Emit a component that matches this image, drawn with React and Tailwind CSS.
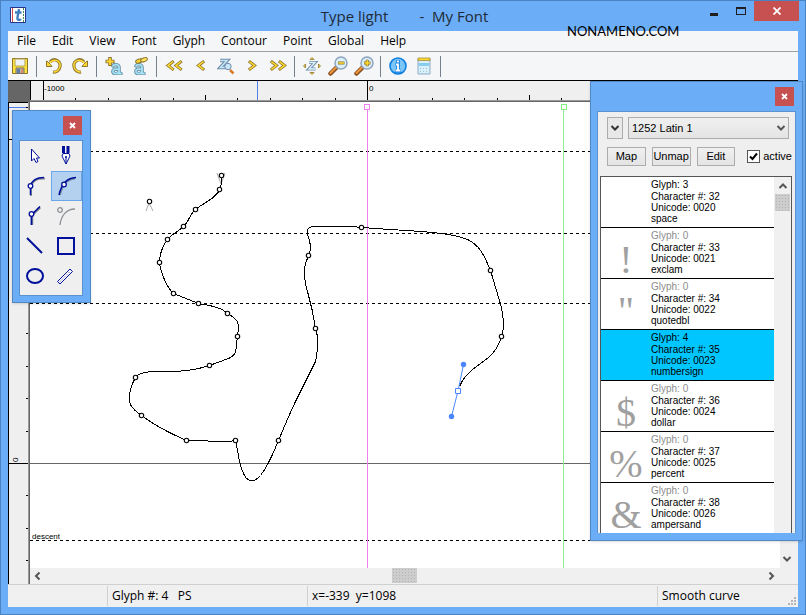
import { useState } from "react";

const menus = ["File", "Edit", "View", "Font", "Glyph", "Contour", "Point", "Global", "Help"];

const glyphs = [
  { glyph: 3, code: 32, unicode: "0020", name: "space", char: "" },
  { glyph: 0, code: 33, unicode: "0021", name: "exclam", char: "!" },
  { glyph: 0, code: 34, unicode: "0022", name: "quotedbl", char: '"' },
  { glyph: 4, code: 35, unicode: "0023", name: "numbersign", char: "" },
  { glyph: 0, code: 36, unicode: "0024", name: "dollar", char: "$" },
  { glyph: 0, code: 37, unicode: "0025", name: "percent", char: "%" },
  { glyph: 0, code: 38, unicode: "0026", name: "ampersand", char: "&" },
];

// on-curve points of the open contour
const points = [
  [149, 201], [221, 175], [219, 189], [195, 209], [183, 226], [167, 239], [159, 262],
  [173, 293], [198, 303], [227, 313], [237, 336], [209, 365], [135, 377], [141, 415],
  [186, 440], [235, 440], [278, 440], [315, 328], [308, 255], [361, 227], [490, 270],
  [501, 336],
];

const contour =
  "M221 175 C222 180 221 184 219 189 C217 197 202 203 195 209 C189 214 188 222 183 226 " +
  "C178 231 172 233 167 239 C162 246 159 254 159 262 C160 272 167 288 173 293 L198 303 " +
  "C208 305 220 306 227 313 C237 319 238 321 238 328 L237 336 C235 350 237 354 228 358 " +
  "L209 365 C192 371 178 371 155 371 C143 371 138 373 135 377 C129 388 128 394 129 401 " +
  "C130 408 137 412 141 415 C157 427 172 434 186 440 L228 441 L235 440 " +
  "C238 452 238 464 244 475 C248 482 254 482 260 475 C268 465 273 452 278 440 " +
  "C285 423 290 411 297 397 L315 361 C317 355 317 340 317 336 L315 328 " +
  "C312 307 310 302 305 284 C304 277 304 266 305 263 L308 255 C311 248 310 246 309 240 " +
  "C307 234 306 230 307 229 C308 227 311 226 315 226 L352 226 L361 227 L390 229 " +
  "C420 231 450 232 467 239 C480 245 484 256 490 270 L501 307 C503 317 503 324 503 328 " +
  "L501 336 C497 350 489 357 480 363 C468 371 462 378 459 386";

const Icon = ({ size = 18, children, ...rest }) => (
  <svg width={size} height={size} viewBox={`0 0 ${size} ${size}`} fill="none" aria-hidden="true" {...rest}>
    {children}
  </svg>
);

const Chevron = ({ d, size = 10, color = "#555" }) => (
  <Icon size={size}>
    <path d={d} stroke={color} strokeWidth="2" />
  </Icon>
);

const DOWN = "M1.500 3 L5 6.500 L8.500 3";
const UP = "M1.500 7 L5 3.500 L8.500 7";
const LEFT = "M6.500 1.500 L3 5 L6.500 8.500";
const RIGHT = "M3.500 1.500 L7 5 L3.500 8.500";

const Arrows = ({ paths }) => (
  <Icon>
    {paths.map((d) => (
      <g key={d} strokeLinecap="square">
        <path d={d} stroke="#8b7430" strokeWidth="3" />
        <path d={d} stroke="#ffd92e" strokeWidth="1.500" />
      </g>
    ))}
  </Icon>
);

const Magnifier = ({ plus }) => (
  <Icon size={20}>
    <path d="M2.500 17.500 L8.500 11.500" stroke="#8a5020" strokeWidth="4.500" strokeLinecap="round" />
    <path d="M2.500 17 L8 11.500" stroke="#f0963c" strokeWidth="2" strokeLinecap="round" />
    <circle cx="13" cy="7" r="6" fill="#dceffa" stroke="#8fa5bf" strokeWidth="1.500" />
    <path d="M10 7h6.500" stroke="#8b7430" strokeWidth="3" />
    {plus && <path d="M13.200 3.700v6.600" stroke="#8b7430" strokeWidth="3" />}
    <path d="M10.500 7h5.500" stroke="#ffd92e" strokeWidth="1.500" />
    {plus && <path d="M13.200 4.200v5.600" stroke="#ffd92e" strokeWidth="1.500" />}
  </Icon>
);

const LetterA = ({ y = 0 }) => (
  <g transform={`translate(0 ${y})`} strokeLinecap="round">
    <path d="M8 8 C9 6 14 6 14 9.500 V15.500 H16 M14 11.500 C10 10.500 7.500 11.500 8 14 C9 16.500 13 16 14 14" stroke="#6a93a8" strokeWidth="3.600" />
    <path d="M8 8 C9 6 14 6 14 9.500 V15.500 H16 M14 11.500 C10 10.500 7.500 11.500 8 14 C9 16.500 13 16 14 14" stroke="#a5e2f5" strokeWidth="1.800" />
  </g>
);

const toolbar = [
  [
    {
      label: "Save",
      icon: (
        <Icon>
          <path d="M1.500 1.500h15v15h-15z" fill="#ffe23c" stroke="#8b7430" />
          <path d="M4 2h10v7H4z" fill="#eef3f7" stroke="#b9a44c" />
          <path d="M5 11h8v5.500H5z" fill="#b5b9c4" stroke="#77705a" />
          <path d="M6 12h3v4H6z" fill="#5e7ea8" />
          <path d="M10 12h2v4h-2z" fill="#e28b5c" />
        </Icon>
      ),
    },
  ],
  [
    {
      label: "Undo",
      icon: (
        <Icon>
          <path d="M5 5 C9 0 16 4 15 9.500 C14.500 13.500 11 15.500 8 15" stroke="#8b7430" strokeWidth="3.200" />
          <path d="M1.500 4 V9.500 H7L5.500 7.500L3 5z" fill="#ffd92e" stroke="#8b7430" />
          <path d="M4.500 6 C9 .5 16 4 15 9.500 C14.500 13 11 15 8.500 15" stroke="#ffd92e" strokeWidth="1.500" />
        </Icon>
      ),
    },
    {
      label: "Redo",
      icon: (
        <Icon>
          <path d="M13 5 C9 0 2 4 3 9.500 C3.500 13.500 7 15.500 10 15" stroke="#8b7430" strokeWidth="3.200" />
          <path d="M16.500 4 V9.500 H11L12.500 7.500L15 5z" fill="#ffd92e" stroke="#8b7430" />
          <path d="M13.500 6 C9 .5 2 4 3 9.500 C3.500 13 7 15 9.500 15" stroke="#ffd92e" strokeWidth="1.500" />
        </Icon>
      ),
    },
  ],
  [
    {
      label: "Add glyph",
      icon: (
        <Icon>
          <LetterA y={1} />
          <path d="M5 0v9M.5 4.500h9" stroke="#8b7430" strokeWidth="3.600" />
          <path d="M5 1v7M1.500 4.500h7" stroke="#ffd92e" strokeWidth="1.800" />
        </Icon>
      ),
    },
    {
      label: "Clear glyph",
      icon: (
        <Icon>
          <g transform="translate(-3 1)"><LetterA /></g>
          <ellipse cx="8" cy="4" rx="3.500" ry="1.900" fill="#ffd92e" stroke="#8b7430" transform="rotate(-20 8 4)" />
          <ellipse cx="13" cy="2.800" rx="3.500" ry="1.900" fill="#ffe45c" stroke="#8b7430" transform="rotate(-20 13 2.800)" />
        </Icon>
      ),
    },
  ],
  [
    { label: "First", icon: <Arrows paths={["M7.500 5 L3 8.500 L7.500 12", "M15.500 5 L11 8.500 L15.500 12"]} /> },
    { label: "Previous", icon: <Arrows paths={["M12 5 L7.500 8.500 L12 12"]} /> },
    {
      label: "Find glyph",
      icon: (
        <Icon>
          <path d="M3 3.500h7L3.500 10.500H9" stroke="#6f8dab" strokeWidth="3.600" />
          <path d="M3 3.500h7L3.500 10.500H9" stroke="#c5e7f7" strokeWidth="1.500" />
          <circle cx="11" cy="9.500" r="3.200" fill="#c8e8fa" stroke="#6f8dab" />
          <path d="M13 13l3.500 3.500" stroke="#d97b2c" strokeWidth="2.500" />
        </Icon>
      ),
    },
    { label: "Next", icon: <Arrows paths={["M7 5 L11.500 8.500 L7 12"]} /> },
    { label: "Last", icon: <Arrows paths={["M3 5 L7.500 8.500 L3 12", "M11 5 L15.500 8.500 L11 12"]} /> },
  ],
  [
    {
      label: "Zoom to fit",
      icon: (
        <Icon>
          <path d="M6 5.500h6L6 12h6.500" stroke="#6f8dab" strokeWidth="3.200" />
          <path d="M6 5.500h6L6 12h6.500" stroke="#dff2fa" strokeWidth="1.300" />
          <g fill="#ffd92e" stroke="#8b7430" strokeWidth=".8">
            <path d="M9 .5l2 2H7zM9 17.500l2-2H7zM.5 9l2-2v4zM17.500 9l-2-2v4z" />
          </g>
        </Icon>
      ),
    },
    { label: "Zoom out", icon: <Magnifier /> },
    { label: "Zoom in", icon: <Magnifier plus /> },
  ],
  [
    {
      label: "Info",
      icon: (
        <Icon>
          <circle cx="9" cy="9" r="8" fill="#7cc6f8" stroke="#0f7fe0" strokeWidth="1.600" />
          <path d="M9 3v3M6.500 7.500H9V14M6 14h6" stroke="#0f7fe0" strokeWidth="3.600" />
          <path d="M9 3.500v2M7 7.500h2v6M6.500 13.500h5" stroke="#fff" strokeWidth="1.800" />
        </Icon>
      ),
    },
    {
      label: "Preview",
      icon: (
        <Icon>
          <path d="M3 1.500h12v15.500H3z" fill="#d9f0fa" stroke="#8fa8c8" />
          <path d="M3 1h12v2.500H3z" fill="#ffd92e" stroke="#a38b3c" strokeWidth=".8" />
          <path d="M3.500 6h11v3h-11z" fill="#86cdf0" />
          <path d="M5 11.500h9M5 14.500h9" stroke="#9cc3d8" strokeDasharray="1 2" />
        </Icon>
      ),
    },
  ],
];

const tools = [
  {
    label: "Select",
    icon: (
      <Icon size={24}>
        <path d="M8.500 5 V17 L11 14.500 L13 18.500 L15 17.500 L13.500 14 H16.500z" fill="#fff" stroke="#00109a" />
      </Icon>
    ),
  },
  {
    label: "Pen",
    icon: (
      <Icon size={24}>
        <path d="M8 2h3v7H8zM12.500 2h3v7h-3z" fill="#00109a" />
        <path d="M9 9.500h6l1 2.500-4 8-4-8z" fill="#fff" stroke="#00109a" />
        <path d="M12 13v7" stroke="#00109a" />
        <circle cx="12" cy="13" r="1" fill="#00109a" />
      </Icon>
    ),
  },
  {
    label: "Tangent",
    icon: (
      <Icon size={24}>
        <path d="M8 22V12C10 6 14 4.500 22 4.500" stroke="#8f9298" strokeWidth="2" />
        <path d="M7.500 21V12C9 6 14 3.500 21 3.500" stroke="#00109a" strokeWidth="1.500" />
        <circle cx="7.500" cy="12" r="2.300" fill="#fff" stroke="#00109a" strokeWidth="1.300" />
      </Icon>
    ),
  },
  {
    label: "Smooth curve",
    icon: (
      <Icon size={24}>
        <path d="M6 21C8 12 12 5 21 4.500" stroke="#7f8fa8" strokeWidth="2" />
        <path d="M5 21C7 12 11 4 22 3.500" stroke="#00109a" strokeWidth="1.500" />
        <circle cx="10" cy="10.500" r="2.300" fill="#fff" stroke="#00109a" strokeWidth="1.300" />
      </Icon>
    ),
  },
  {
    label: "Corner",
    icon: (
      <Icon size={24}>
        <path d="M9 21V11L17 3.500" stroke="#8f9298" strokeWidth="2.500" />
        <path d="M8.500 21V11L17 2.500" stroke="#00109a" strokeWidth="1.700" />
        <circle cx="8.500" cy="10" r="2.300" fill="#fff" stroke="#00109a" strokeWidth="1.300" />
      </Icon>
    ),
  },
  {
    label: "Off curve",
    icon: (
      <Icon size={24}>
        <path d="M6 21C7 12 12 5 21 5" stroke="#8f9298" strokeWidth="1.300" />
        <circle cx="6" cy="6" r="2.300" stroke="#8f9298" strokeWidth="1.300" />
      </Icon>
    ),
  },
  {
    label: "Line",
    icon: (
      <Icon size={24}>
        <path d="M4 4L19 19" stroke="#00109a" strokeWidth="2" />
      </Icon>
    ),
  },
  {
    label: "Rectangle",
    icon: (
      <Icon size={24}>
        <path d="M4 4h16v16H4z" stroke="#00109a" strokeWidth="2" />
      </Icon>
    ),
  },
  {
    label: "Ellipse",
    icon: (
      <Icon size={24}>
        <ellipse cx="12" cy="12" rx="8" ry="7" stroke="#00109a" strokeWidth="2" />
      </Icon>
    ),
  },
  {
    label: "Measure",
    icon: (
      <Icon size={24}>
        <path d="M3.500 17.500L16 5l2.500 2.500L6 20z" fill="#fff" stroke="#00109a" />
        <path d="M6 17.500L16.500 7" stroke="#00109a" strokeDasharray="1 2" />
      </Icon>
    ),
  },
];

const CloseButton = ({ label }) => (
  <button aria-label={label} className="flex h-[19px] w-[19px] items-center justify-center bg-[#c75050]">
    <Icon size={7}>
      <path d="M1 1L6 6M6 1L1 6" stroke="#fff" strokeWidth="1.800" />
    </Icon>
  </button>
);

const TitleBar = () => (
  <header className="flex h-[30px] shrink-0 items-start">
    <div className="flex flex-1 pt-1.5 pl-0.5">
      <Icon size={16}>
        <path d="M.5.500h15v15H.5z" fill="#fff" stroke="#27348b" />
        <path d="M2.500 1v14" stroke="#d04a4a" />
        <path d="M13.500 1v14" stroke="#3c8a4c" strokeDasharray="2 1" />
        <path d="M9 2L7.500 10.500C7 13.500 9.500 13.500 11 12M5 5.500h6.500" stroke="#3f7fc0" strokeWidth="2.400" />
      </Icon>
    </div>
    <h1 className="pt-[3px] text-[15px] leading-6 whitespace-pre text-[#1f2a36]">{"Type light        -  My Font"}</h1>
    <div className="flex flex-1 justify-end">
      <button aria-label="Minimize" className="flex h-5 w-7 items-end justify-center pb-[5px]">
        <span className="h-[3px] w-2 bg-[#1e1e1e]" />
      </button>
      <button aria-label="Maximize" className="flex h-5 w-[26px] items-center justify-center">
        <span className="h-2 w-2.5 border border-t-2 border-[#1e1e1e]" />
      </button>
      <button aria-label="Close" className="flex h-5 w-[45px] items-center justify-center bg-[#c75050]">
        <Icon size={8}>
          <path d="M.5.500L7.500 7.500M7.500.500L.5 7.500" stroke="#fff" strokeWidth="1.800" />
        </Icon>
      </button>
    </div>
  </header>
);

const ticks = (from, to) => {
  const list = [];
  for (let i = from; i <= to; i++) list.push(i);
  return list;
};

const TopRuler = () => (
  <div className="flex h-[21px] shrink-0 bg-[#efefef]">
    <div className="w-[22px] shrink-0 bg-[#666]" />
    <svg className="h-full min-w-0 flex-1" aria-hidden="true">
      <g transform="translate(-30 -81)" shapeRendering="crispEdges">
        <path d="M30.500 81v19M43.500 81v19" stroke="#000" />
        {ticks(1, 24).map((i) => {
          const x = Math.round(43 + i * 32.4) + 0.5;
          const top = i % 10 === 0 ? 81 : i % 5 === 0 ? 95 : 98;
          return <path key={i} d={`M${x} ${top}V100`} stroke="#000" />;
        })}
        <path d="M257.500 81v19" stroke="#4f7fe8" />
        <path d="M29 100.500H2000" stroke="#999" />
        <path d="M29 101.500H2000" stroke="#666" />
        <text x="44" y="91" fontSize="8" fontFamily="Liberation Sans, sans-serif">-1000</text>
        <text x="369" y="91" fontSize="8" fontFamily="Liberation Sans, sans-serif">0</text>
      </g>
    </svg>
  </div>
);

const SideRuler = () => (
  <svg className="w-[21px] shrink-0 self-stretch border-l border-black bg-[#efefef]" aria-hidden="true">
    <g transform="translate(-9 -102)" shapeRendering="crispEdges">
      <path d="M8 102.500h20" stroke="#000" />
      <path d="M8 107.500h20" stroke="#4f7fe8" />
      {ticks(-11, 20).map((i) => {
        const y = Math.round(463 + i * 32.4) + 0.5;
        const left = i % 10 === 0 ? 8 : i % 5 === 0 ? 23 : 26;
        return <path key={i} d={`M${left} ${y}H28`} stroke="#000" />;
      })}
      <text x="18" y="462" fontSize="8" fontFamily="Liberation Sans, sans-serif" transform="rotate(-90 18 462)">0</text>
      <path d="M28.500 102V2000" stroke="#999" />
    </g>
  </svg>
);

const Canvas = () => (
  <svg className="h-full w-full" role="img" aria-label="Glyph outline">
    <g transform="translate(-30 -102)" fill="none">
      <g stroke="#000" strokeDasharray="3 3" shapeRendering="crispEdges">
        <path d="M30 151.500H2000M30 233.500H2000M30 303.500H2000M30 540.500H2000" />
      </g>
      <g shapeRendering="crispEdges">
        <path d="M30 463.500H2000" stroke="#666" />
        <path d="M367.500 110V2000" stroke="#f07ff0" />
        <path d="M563.500 110V2000" stroke="#8cf08c" />
        <path d="M364.500 104.500h5v5h-5z" stroke="#f07ff0" fill="#fff" />
        <path d="M561.500 104.500h5v5h-5z" stroke="#7ff07f" fill="#fff" />
      </g>
      <text x="32" y="539" fontSize="8" fill="#000" fontFamily="Liberation Sans, sans-serif">descent</text>
      <path d="M146 211L149 203L153 211M217 173L221 184L225 173" stroke="#aaa" />
      <g shapeRendering="crispEdges">
        <path d={contour} stroke="#000" transform="translate(.5 .5)" />
      </g>
      {points.map(([x, y]) => (
        <circle key={`${x}-${y}`} cx={x + 0.5} cy={y + 0.5} r="2.200" fill="#fff" stroke="#000" strokeWidth="1.100" />
      ))}
      <path d="M463.500 364.500L458 391L451.500 416.500" stroke="#4a86ff" />
      <circle cx="463.500" cy="364.500" r="2.700" fill="#4a86ff" />
      <circle cx="451.500" cy="416.500" r="2.700" fill="#4a86ff" />
      <path d="M455.500 388.500h5v5h-5z" fill="#fff" stroke="#4a86ff" />
    </g>
  </svg>
);

// dotted scrollbar thumb
const Thumb = ({ className }) => (
  <div className={`bg-[#cdcdcd] bg-[radial-gradient(#b2b2b2_1px,transparent_1px)] bg-size-[3px_3px] ${className}`} />
);

const ToolPanel = () => {
  const [active, setActive] = useState("Smooth curve");

  return (
    <section className="absolute top-[109px] left-[11px] w-[79px] border border-[#5088c4] bg-[#6badf6] pt-[5px] pr-[7px] pb-1.5 pl-1.5 shadow">
      <div className="flex justify-end pr-px">
        <CloseButton label="Close tools" />
      </div>
      <div className="mt-[5px] grid grid-cols-2 border border-[#5a92cf] bg-[#efefef] pb-1">
        {tools.map((tool) => (
          <button
            key={tool.label}
            aria-label={tool.label}
            onClick={() => setActive(tool.label)}
            className={`flex h-[30px] items-center justify-center border pr-0.5 ${
              active === tool.label ? "border-[#6ba6e8] bg-[#b4d2f0]" : "border-transparent"
            }`}
          >
            {tool.icon}
          </button>
        ))}
      </div>
    </section>
  );
};

const GlyphPanel = () => {
  const [selected, setSelected] = useState(35);
  const [active, setActive] = useState(true);
  const button = "h-[19px] w-[39px] border border-[#acacac] bg-gradient-to-b from-[#f0f0f0] to-[#e4e4e4]";

  return (
    <section className="absolute top-[80px] right-0.5 bottom-[73px] flex w-[213px] flex-col border border-[#5088c4] bg-[#6badf6] px-1.5 pt-[5px] pb-[7px] font-['Liberation_Sans',Arial,sans-serif] text-[11px] shadow">
      <div className="flex justify-end px-0.5">
        <CloseButton label="Close glyph list" />
      </div>
      <div className="mt-[5px] flex min-h-0 flex-1 flex-col border border-b-0 border-[#5a92cf] bg-[#efefef] pr-[3px] pl-0.5">
        <div className="flex gap-[5px] px-[7px] pt-[5px]">
          <button aria-label="Encoding menu" className="flex h-[22px] w-4 items-center justify-center border border-[#acacac] bg-[#e8e8e8]">
            <Chevron d={DOWN} color="#333" />
          </button>
          <div className="relative -mr-1 flex-1">
            <select
              aria-label="Encoding"
              className="h-[22px] w-full appearance-none border border-[#acacac] bg-gradient-to-b from-[#f0f0f0] to-[#e4e4e4] px-[3px] text-[11px]"
            >
              <option>1252 Latin 1</option>
            </select>
            <span className="pointer-events-none absolute top-1.5 right-[3px]">
              <Chevron d={DOWN} />
            </span>
          </div>
        </div>
        <div className="flex items-center gap-1.5 pt-2 pl-[7px]">
          <button className={button}>Map</button>
          <button className={button}>Unmap</button>
          <button className={button}>Edit</button>
          <label className="relative ml-1.5 flex items-center gap-[3px]">
            <input
              type="checkbox"
              checked={active}
              onChange={(e) => setActive(e.target.checked)}
              className="peer h-[13px] w-[13px] shrink-0 appearance-none border border-[#555] bg-white"
            />
            <span className="pointer-events-none absolute left-0.5 hidden peer-checked:block">
              <Icon size={9}>
                <path d="M1 4.500L3.500 7L8 1.500" stroke="#000" strokeWidth="2" />
              </Icon>
            </span>
            active
          </label>
        </div>
        <div className="mt-2.5 flex min-h-0 flex-1 overflow-hidden border border-b-0 border-[#555]">
          <ul className="h-0 min-w-0 flex-1">
            {glyphs.map((g) => (
              <li key={g.code}>
                <button
                  onClick={() => setSelected(g.code)}
                  className={`flex h-[51px] w-full border-b border-black text-left text-[10px] leading-[11px] ${
                    selected === g.code ? "bg-[#00c6ff]" : "bg-white"
                  }`}
                >
                  <span className="flex h-[50px] w-[50px] shrink-0 items-end justify-center font-['Liberation_Serif',serif] text-[40px] leading-9 text-[#a0a0a0]">
                    {g.char}
                  </span>
                  <span className="flex flex-col pt-0.5">
                    <span className={`leading-3 ${g.glyph === 0 ? "text-[#8c8c8c]" : ""}`}>Glyph: {g.glyph}</span>
                    <span>Character #: {g.code}</span>
                    <span>Unicode: {g.unicode}</span>
                    <span>{g.name}</span>
                  </span>
                </button>
              </li>
            ))}
          </ul>
          <div className="ml-px flex w-4 shrink-0 flex-col bg-[#f0f0f0]">
            <button aria-label="Scroll up" className="flex h-[17px] items-center justify-center">
              <Chevron d={UP} />
            </button>
            <Thumb className="h-[17px] w-[15px]" />
          </div>
        </div>
      </div>
    </section>
  );
};

const StatusBar = () => (
  <footer className="flex h-[23px] shrink-0 items-center border-t border-[#d0d0d0] bg-[#f0f0f0] text-xs">
    <div className="w-[99px] shrink-0" />
    <div className="w-[200px] shrink-0 border-l border-[#d0d0d0] pl-1 leading-5 whitespace-pre">{"Glyph #: 4   PS"}</div>
    <div className="flex-1 border-l border-[#d0d0d0] pl-1 leading-5 whitespace-pre">x=-339  y=1098</div>
    <div className="w-[130px] shrink-0 border-l border-[#d0d0d0] pl-1 leading-5">Smooth curve</div>
    <Icon size={11} className="self-end">
      <path d="M7 1h2v2H7zM4 4h2v2H4zM7 4h2v2H7zM1 7h2v2H1zM4 7h2v2H4zM7 7h2v2H7z" fill="#b5b5b5" />
    </Icon>
  </footer>
);

const App = () => {
  return (
    <div className="relative flex min-h-screen flex-col border border-[#4a83c2] bg-[#6badf6] pb-[7px] pl-[7px] font-['Open_Sans','Noto_Sans',sans-serif] text-black">
      <div className="flex flex-1 flex-col pr-1.5">
        <TitleBar />

        <main className="mr-px flex flex-1 flex-col">
          <nav className="flex h-[21px] shrink-0 items-center gap-4 border-b border-[#a0a0a0] bg-[#f5f6f7] pl-[9px] text-xs">
            {menus.map((menu) => (
              <button key={menu}>{menu}</button>
            ))}
          </nav>

          <div className="flex h-[29px] shrink-0 items-center gap-0.5 border-b border-black bg-[#f5f6f7]">
            {toolbar.map((group, i) => (
              <div key={i} className="flex items-center gap-0.5">
                {group.map((item) => (
                  <button key={item.label} aria-label={item.label} className="flex h-6 w-6 items-center justify-center">
                    {item.icon}
                  </button>
                ))}
                <span className="mr-[3px] ml-0.5 h-[21px] w-px bg-[#77808f]" />
              </div>
            ))}
          </div>

          <TopRuler />
          <div className="flex min-h-[400px] flex-1 bg-[#f0f0f0]">
            <SideRuler />
            <div className="flex min-w-0 flex-1 flex-col border-l border-[#666]">
              <div className="flex flex-1">
                <div className="relative min-w-0 flex-1 bg-white">
                  <div className="absolute inset-0">
                    <Canvas />
                  </div>
                </div>
                <button aria-label="Scroll down" className="flex w-[18px] shrink-0 items-end pb-1 pl-0.5">
                  <Chevron d={DOWN} />
                </button>
              </div>
              <div className="flex h-4 items-center pr-[22px] pl-[3px]">
                <button aria-label="Scroll left">
                  <Chevron d={LEFT} />
                </button>
                <div className="flex h-full flex-1 justify-center">
                  <Thumb className="h-[15px] w-[25px]" />
                </div>
                <button aria-label="Scroll right">
                  <Chevron d={RIGHT} />
                </button>
              </div>
            </div>
          </div>
          <StatusBar />
        </main>
      </div>

      <p className="absolute top-5 left-[566px] font-['Lato',sans-serif] text-[13px] leading-5">NONAMENO.COM</p>
      <ToolPanel />
      <GlyphPanel />
    </div>
  );
};

export default App;
